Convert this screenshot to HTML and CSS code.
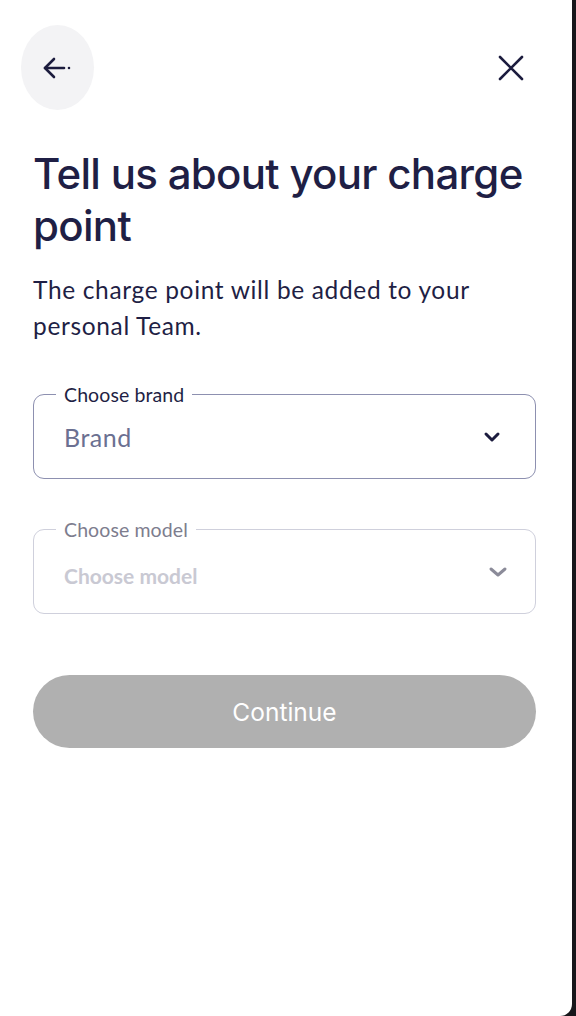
FILE: index.html
```html
<!DOCTYPE html>
<html>
<head>
<meta charset="utf-8">
<link rel="stylesheet" href="styles.css">
</head>
<body>
<div class="screen">
  <div class="panel">
    <div class="topbar">
      <button class="back" aria-label="Back">
        <svg width="34" height="34" viewBox="0 0 34 34" fill="none" stroke="#1c1c3e" stroke-width="2.6" stroke-linecap="round" stroke-linejoin="round">
          <path d="M13 8 L4 17 L13 26"/>
          <path d="M4 17 H23"/>
          <circle cx="28" cy="17" r="0.6" fill="#1c1c3e" stroke-width="1.4"/>
        </svg>
      </button>
      <button class="close" aria-label="Close">
        <svg width="26" height="26" viewBox="0 0 26 26" fill="none" stroke="#1c1c3e" stroke-width="2.6" stroke-linecap="round">
          <path d="M2 2 L24 24 M24 2 L2 24"/>
        </svg>
      </button>
    </div>
    <h1 class="title">Tell us about your charge point</h1>
    <p class="subtitle">The charge point will be added to your personal Team.</p>

    <div class="field active">
      <span class="label">Choose brand</span>
      <span class="value">Brand</span>
      <svg class="chev" width="18" height="12" viewBox="0 0 18 12" fill="none" stroke="#1c1c3e" stroke-width="3" stroke-linecap="round" stroke-linejoin="round"><path d="M3 3 L9 9 L15 3"/></svg>
    </div>

    <div class="field disabled">
      <span class="label">Choose model</span>
      <span class="value">Choose model</span>
      <svg class="chev" width="20" height="12" viewBox="0 0 20 12" fill="none" stroke="#8b8b99" stroke-width="3" stroke-linecap="round" stroke-linejoin="round"><path d="M3 3 L10 9 L17 3"/></svg>
    </div>

    <button class="continue">Continue</button>
  </div>
  <div class="edge"></div>
</div>
</body>
</html>
```
FILE: styles.css
```css
* { box-sizing: border-box; }
html, body { margin: 0; padding: 0; }
body {
  width: 576px;
  height: 1016px;
  background: #17171b;
  overflow: hidden;
  font-family: "Lato", "Noto Sans", sans-serif;
}
.screen {
  display: flex;
  height: 1016px;
}
.panel {
  width: 572px;
  height: 1016px;
  background: #ffffff;
  border-bottom-right-radius: 12px;
  padding: 0 36px 0 33px;
  display: flex;
  flex-direction: column;
}
.edge { flex: 1; background: #17171b; }
.topbar {
  display: flex;
  justify-content: space-between;
  align-items: center;
  margin: 25px 12px 0 -12px;
  height: 85px;
}
.back {
  width: 73px;
  height: 85px;
  border-radius: 50%;
  border: none;
  background: #f3f3f5;
  display: flex;
  align-items: center;
  justify-content: center;
  padding: 0;
}
.close {
  border: none;
  background: none;
  padding: 0;
  width: 26px;
  height: 26px;
  display: flex;
}
.title {
  margin: 38px 0 0 0;
  font-family: "Inter", sans-serif;
  font-weight: 500;
  font-size: 42px;
  line-height: 52px;
  letter-spacing: -0.7px;
  color: #1f1f45;
}
.subtitle {
  margin: 20px 0 0 0;
  font-size: 24.5px;
  line-height: 36px;
  color: #1f1f45;
  letter-spacing: 0.65px;
}
.field {
  position: relative;
  height: 85px;
  border-radius: 11px;
  border: 1.5px solid #8d90b0;
  display: flex;
  align-items: center;
  padding: 0 34px 0 30px;
}
.field.active { margin-top: 50px; }
.field.disabled {
  margin-top: 50px;
  border-color: #cfd0dc;
}
.label {
  position: absolute;
  top: -9px;
  left: 22px;
  padding: 0 8px;
  background: #fff;
  font-size: 19.5px;
  line-height: 18px;
  color: #1f1f45;
  letter-spacing: 0.1px;
}
.disabled .label { color: #7d7d8e; }
.value {
  flex: 1;
  font-size: 25px;
  color: #6b7091;
  letter-spacing: 0.5px;
}
.disabled .value {
  color: #c9c9d3;
  font-weight: 700;
  font-size: 21px;
  letter-spacing: 0;
  padding-top: 8px;
}
.chev { flex: none; }
.disabled .chev { margin-right: -7px; }
.continue {
  margin-top: 61px;
  height: 73px;
  border: none;
  border-radius: 37px;
  background: #b0b0b0;
  color: #ffffff;
  font-family: "Inter", "Liberation Sans", sans-serif;
  font-size: 24.5px;
  font-weight: 400;
  padding-top: 2px;
}
```
